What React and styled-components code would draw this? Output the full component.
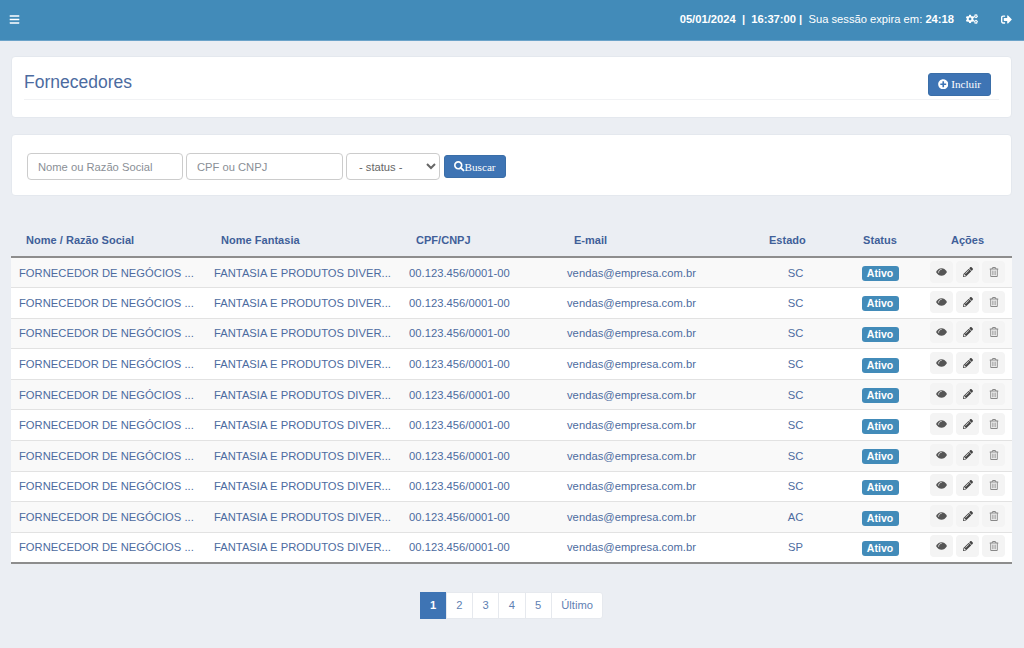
import React from "react";
import styled, { createGlobalStyle } from "styled-components";
import {
  FaBars,
  FaCogs,
  FaPencilAlt,
  FaPlusCircle,
  FaRegTrashAlt,
  FaSearch,
  FaSignOutAlt,
} from "react-icons/fa";

const GlobalStyle = createGlobalStyle`
  html, body { margin: 0; padding: 0; background: #ebeef3; }
  body { font-family: "Liberation Sans", Arial, sans-serif; color: #4c6ba0; }
  * { box-sizing: border-box; }
`;

const TopBar = styled.header`
  height: 41px;
  background: #428bb9;
  border-bottom: 1px solid #6ba3c9;
  display: flex;
  align-items: center;
  justify-content: space-between;
  padding: 0 12px 2px 9px;
  color: #fff;
`;

const TopInfo = styled.div`
  display: flex;
  align-items: center;
  font-size: 11.2px;
  white-space: pre;
`;

const Strong = styled.b`
  font-weight: 700;
`;

const TopIcon = styled.span`
  display: inline-flex;
  font-size: ${(p) => p.$size || 12}px;
  margin-left: ${(p) => p.$gap}px;
`;

const Page = styled.main`
  padding: 15px 12px 0 11px;
`;

const Card = styled.section`
  background: #fff;
  border: 1px solid #e4e8ee;
  border-radius: 4px;
`;

const TitleCard = styled(Card)`
  height: 62px;
  padding: 0 12px;
  margin-bottom: 16px;
`;

const TitleRow = styled.div`
  height: 43px;
  border-bottom: 1px solid #f1f2f4;
  display: flex;
  align-items: center;
  justify-content: space-between;
  padding: 8px 8px 0 0;
`;

const Title = styled.h1`
  margin: 0;
  font-size: 17.5px;
  font-weight: 400;
  color: #4c6ba0;
`;

const Button = styled.button`
  display: inline-flex;
  align-items: center;
  height: 23px;
  padding: 0 9px;
  background: #3e74b4;
  border: 1px solid #3a6ea8;
  border-radius: 3px;
  color: #fff;
  font-family: "Liberation Serif", "Times New Roman", serif;
  font-size: 11.2px;
  svg { font-size: 10.5px; flex-shrink: 0; }
`;

const AddButton = styled(Button)`
  margin-top: 4px;
  svg { margin-right: 3px; }
`;

const SearchButton = styled(Button)`
  margin-left: 1px;
`;

const FilterCard = styled(Card)`
  height: 62px;
  display: flex;
  align-items: center;
  gap: 3px;
  padding: 3px 15px 0;
  margin-bottom: 32px;
`;

const Input = styled.input`
  width: ${(p) => p.$w}px;
  height: 27px;
  padding: 0 10px;
  border: 1px solid #ccc;
  border-radius: 4px;
  font-family: inherit;
  font-size: 11.2px;
  &::placeholder { color: #8a8f96; opacity: 1; }
`;

const Select = styled.select`
  width: 94px;
  height: 27px;
  padding: 0 8px;
  border: 1px solid #ccc;
  border-radius: 4px;
  background: #fff;
  color: #666;
  font-family: inherit;
  font-size: 11.2px;
`;

const Table = styled.table`
  width: 1001px;
  table-layout: fixed;
  border-collapse: collapse;
  font-size: 11.2px;
  letter-spacing: 0.03px;
  color: #4c6ba0;
  border-bottom: 2px solid #8d8d8d;
`;

const Th = styled.th`
  height: 29px;
  padding: 0 0 4px 15px;
  text-align: ${(p) => p.$align || "left"};
  font-size: 11px;
  font-weight: 700;
  color: #3f5f99;
  border-bottom: 2px solid #8d8d8d;
  ${(p) => p.$align === "center" && "padding-left: 0;"}
`;

const Row = styled.tr`
  height: 30.6px;
  background: ${(p) => (p.$odd ? "#f9f9f9" : "#fff")};
  border-top: 1px solid #e2e2e2;
`;

const Td = styled.td`
  padding: 0 8px;
  text-align: ${(p) => p.$align || "left"};
  white-space: nowrap;
`;

const Badge = styled.span`
  display: inline-block;
  width: 37px;
  padding: 2px 0;
  border-radius: 3px;
  background: #428bb9;
  color: #fff;
  font-size: 10.5px;
  font-weight: 700;
  line-height: 11px;
  text-align: center;
  vertical-align: -3px;
`;

const Actions = styled.div`
  display: flex;
  justify-content: center;
  gap: 3px;
  padding-bottom: 2px;
`;

const ActionBtn = styled.span`
  flex-shrink: 0;
  width: 23px;
  height: 22px;
  display: inline-flex;
  align-items: center;
  justify-content: center;
  background: #f4f4f4;
  border-radius: 4px;
  font-size: 10px;
  color: ${(p) => p.$color || "#444"};
`;

const Pager = styled.nav`
  display: flex;
  justify-content: center;
  margin: 28px 0 0 1px;
`;

const PageItem = styled.span`
  height: 27px;
  padding: 0 9.5px;
  display: flex;
  align-items: center;
  font-size: 11.2px;
  background: ${(p) => (p.$active ? "#3e74b4" : "#fff")};
  color: ${(p) => (p.$active ? "#fff" : "#5f7fb3")};
  font-weight: ${(p) => (p.$active ? 700 : 400)};
  border: 1px solid ${(p) => (p.$active ? "#3e74b4" : "#e6e9ee")};
  margin-left: -1px;
  &:last-child { border-radius: 0 3px 3px 0; }
`;

// olho cheio, o FaEye tem o miolo vazado e fica fino demais nesse tamanho
const EyeIcon = () => (
  <svg width="11" height="8" viewBox="0 0 16 11" fill="#555">
    <path d="M0 5.500C2.500 1.500 5 0 8 0s5.500 1.500 8 5.500C13.500 9.500 11 11 8 11S2.500 9.500 0 5.500z" />
    <path d="M3.800 6.500C3.600 3.800 5.500 1.800 8.200 1.700" fill="none" stroke="#e8e8e8" strokeWidth="1.300" />
  </svg>
);

const estados = ["SC", "SC", "SC", "SC", "SC", "SC", "SC", "SC", "AC", "SP"];
const pages = ["1", "2", "3", "4", "5", "Último"];

export default function App() {
  return (
    <>
      <GlobalStyle />
      <TopBar>
        <TopIcon $size={11} $gap={0}><FaBars /></TopIcon>
        <TopInfo>
          <Strong>05/01/2024  |  16:37:00 |</Strong>
          {"  Sua sessão expira em: "}
          <Strong>24:18</Strong>
          <TopIcon $gap={12}><FaCogs /></TopIcon>
          <TopIcon $size={11} $gap={23}><FaSignOutAlt /></TopIcon>
        </TopInfo>
      </TopBar>
      <Page>
        <TitleCard>
          <TitleRow>
            <Title>Fornecedores</Title>
            <AddButton><FaPlusCircle />Incluir</AddButton>
          </TitleRow>
        </TitleCard>
        <FilterCard>
          <Input $w={156} placeholder="Nome ou Razão Social" />
          <Input $w={157} placeholder="CPF ou CNPJ" />
          <Select defaultValue=""><option value="">- status -</option></Select>
          <SearchButton><FaSearch />Buscar</SearchButton>
        </FilterCard>
        <Table>
          <colgroup>
            <col style={{ width: 195 }} />
            <col style={{ width: 195 }} />
            <col style={{ width: 158 }} />
            <col style={{ width: 195 }} />
            <col style={{ width: 83 }} />
            <col style={{ width: 86 }} />
            <col style={{ width: 89 }} />
          </colgroup>
          <thead>
            <tr>
              <Th>Nome / Razão Social</Th>
              <Th>Nome Fantasia</Th>
              <Th>CPF/CNPJ</Th>
              <Th>E-mail</Th>
              <Th>Estado</Th>
              <Th $align="center">Status</Th>
              <Th $align="center">Ações</Th>
            </tr>
          </thead>
          <tbody>
            {estados.map((uf, i) => (
              <Row key={i} $odd={i % 2 === 0}>
                <Td>FORNECEDOR DE NEGÓCIOS ...</Td>
                <Td>FANTASIA E PRODUTOS DIVER...</Td>
                <Td>00.123.456/0001-00</Td>
                <Td>vendas@empresa.com.br</Td>
                <Td $align="center">{uf}</Td>
                <Td $align="center"><Badge>Ativo</Badge></Td>
                <Td>
                  <Actions>
                    <ActionBtn><EyeIcon /></ActionBtn>
                    <ActionBtn><FaPencilAlt /></ActionBtn>
                    <ActionBtn $color="#888"><FaRegTrashAlt /></ActionBtn>
                  </Actions>
                </Td>
              </Row>
            ))}
          </tbody>
        </Table>
        <Pager>
          {pages.map((p, i) => (
            <PageItem key={p} $active={i === 0}>{p}</PageItem>
          ))}
        </Pager>
      </Page>
    </>
  );
}
